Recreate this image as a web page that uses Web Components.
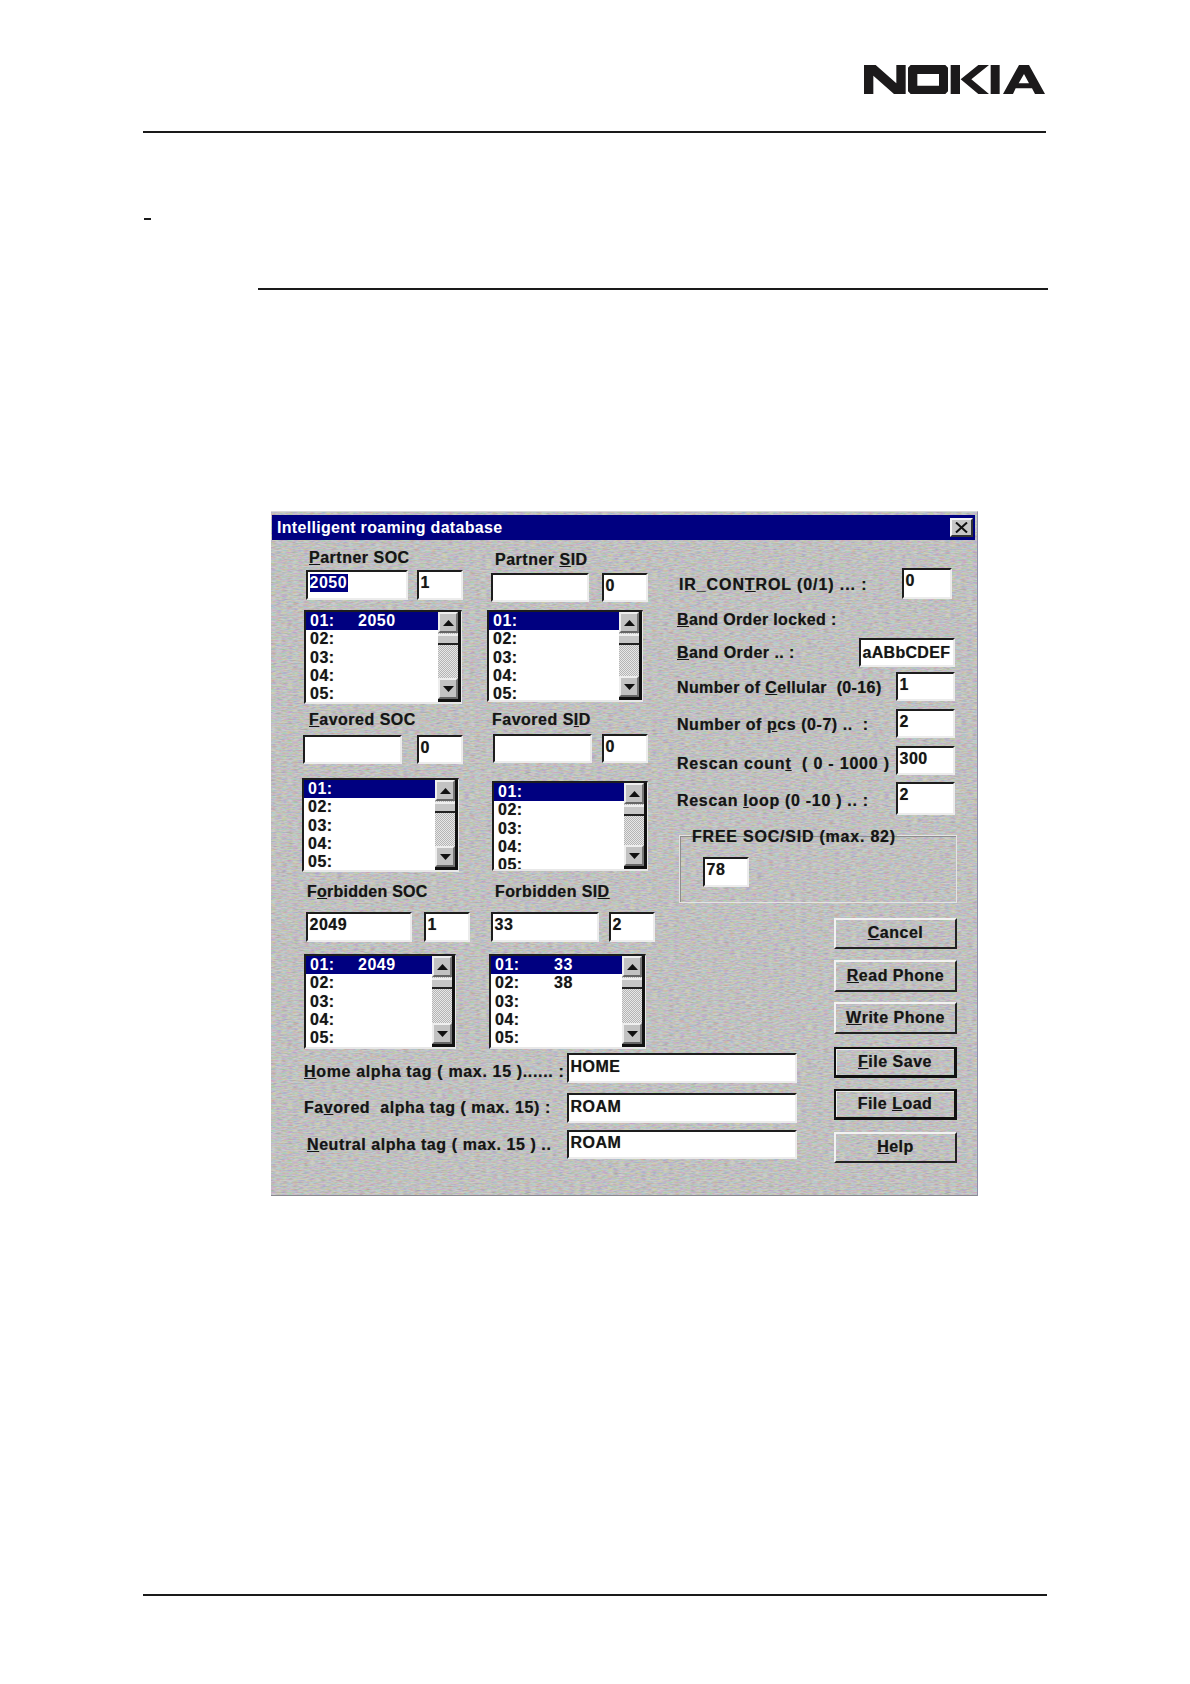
<!DOCTYPE html>
<html lang="en"><head><meta charset="utf-8"><title>Intelligent roaming database</title>
<style>
html,body{margin:0;padding:0;background:#fff}
body{font-family:"Liberation Sans",Arial,sans-serif}
</style></head>
<body>
<doc-page>
  <roam-dialog heading="Intelligent roaming database">
    <div slot="left" class="left-stack" style="display:flex;flex-direction:column">
      <div style="display:flex;align-items:flex-start;margin-left:2px">
        <soc-group style="width:183px;--lx:5px;--ix:2px;--w1:102px;--gap:9px;--ig:4px;--ih:30px;--lg:10px;--lw:158px;--lh:94px" v1="2050" v2="1" selected first="2050">
          <span slot="label"><u>P</u>artner SOC</span></soc-group>
        <soc-group noclip style="margin-top:2px;--lx:8px;--ix:4px;--w1:98px;--gap:13px;--ig:5px;--ih:29px;--lg:8px;--lw:156px;--lh:92px" v2="0">
          <span slot="label">Partner <u>S</u>ID</span></soc-group>
      </div>
      <div style="display:flex;align-items:flex-start;margin-top:6px">
        <soc-group style="width:190px;--lx:7px;--ix:1px;--w1:99px;--gap:15px;--ig:7px;--ih:29px;--lg:14px;--lw:157px;--lh:94px" v2="0">
          <span slot="label"><u>F</u>avored SOC</span></soc-group>
        <soc-group style="--lx:0px;--ix:1px;--w1:99px;--gap:10px;--ig:6px;--ih:29px;--lg:18px;--lw:156px;--lh:90px" v2="0">
          <span slot="label">Favored S<u>I</u>D</span></soc-group>
      </div>
      <div style="display:flex;align-items:flex-start;margin-top:10px;margin-left:2px">
        <soc-group style="width:185px;letter-spacing:.25px;--lx:3px;--ix:2px;--w1:106px;--gap:12px;--ig:12px;--ih:30px;--lg:12px;--lw:152px;--lh:95px" v1="2049" v2="1" first="2049">
          <span slot="label">F<u>o</u>rbidden SOC</span></soc-group>
        <soc-group style="letter-spacing:.4px;--lx:6px;--ix:2px;--w1:108px;--gap:10px;--ig:12px;--ih:30px;--lg:12px;--lw:157px;--lh:95px" v1="33" v2="2" first="33" second="38" col="59">
          <span slot="label">Forbidden SI<u>D</u></span></soc-group>
      </div>
      <div style="margin:4px 0 0 2px;display:flex;flex-direction:column">
        <tag-row style="--h:30px;--pt:10px;--ls:.65px"><span><u>H</u>ome alpha tag ( max. 15 )...... :</span><win-field slot="field" style="width:230px;height:30px;padding-top:3px">HOME</win-field></tag-row>
        <tag-row style="--h:30px;--pt:6px;--ls:.56px;margin-top:10px"><span>Fa<u>v</u>ored&nbsp; alpha tag ( max. 15) :</span><win-field slot="field" style="width:230px;height:30px;padding-top:3px">ROAM</win-field></tag-row>
        <tag-row style="--h:29px;--pt:6px;--pl:3px;--ls:.58px;margin-top:7px"><span><u>N</u>eutral alpha tag ( max. 15 ) ..</span><win-field slot="field" style="width:230px;height:29px">ROAM</win-field></tag-row>
      </div>
    </div>
    <div slot="right" style="display:flex;flex-direction:column">
      <set-row style="--pl:2px;--pr:3px;--pt:8px;--ls:.9px"><span>IR_CON<u>T</u>ROL (0/1) ... :</span><win-field slot="field" style="width:50px;height:31px">0</win-field></set-row>
      <set-row style="margin-top:11px;height:20px;--pt:1px;--ls:.35px"><span><u>B</u>and Order locked :</span></set-row>
      <set-row style="margin-top:8px;--pt:6px;--ls:.45px"><span><u>B</u>and Order .. :</span><win-field slot="field" style="width:96px;height:29px;padding-top:4px;letter-spacing:.3px">aABbCDEF</win-field></set-row>
      <set-row style="margin-top:5px;--pt:7px;--ls:.38px"><span>Number of <u>C</u>ellular&nbsp; (0-16)</span><win-field slot="field" style="width:59px;height:29px">1</win-field></set-row>
      <set-row style="margin-top:8px;--pt:7px;--ls:.55px"><span>Number of <u>p</u>cs (0-7) ..&nbsp; :</span><win-field slot="field" style="width:59px;height:29px">2</win-field></set-row>
      <set-row style="margin-top:8px;--pt:9px;--ls:.8px"><span>Rescan coun<u>t</u>&nbsp; ( 0 - 1000 )</span><win-field slot="field" style="width:59px;height:29px">300</win-field></set-row>
      <set-row style="margin-top:7px;--pt:10px;--ls:.7px"><span>Rescan <u>l</u>oop (0 -10 ) .. :</span><win-field slot="field" style="width:59px;height:33px">2</win-field></set-row>
      <free-box heading="FREE SOC/SID (max. 82)" style="margin:9px 0 0 2px"><win-field style="width:46px;height:30px">78</win-field></free-box>
      <div style="display:flex;flex-direction:column;align-self:flex-end;margin:15px 18px 0 0">
        <win-button><u>C</u>ancel</win-button>
        <win-button style="margin-top:11px;height:32px"><u>R</u>ead Phone</win-button>
        <win-button style="margin-top:10px;height:32px"><u>W</u>rite Phone</win-button>
        <win-button default style="margin-top:13px"><u>F</u>ile Save</win-button>
        <win-button default style="margin-top:11px"><span>File <u>L</u>oad</span></win-button>
        <win-button style="margin-top:12px"><u>H</u>elp</win-button>
      </div>
    </div>
  </roam-dialog>
</doc-page>

<script>
const el=(html)=>{const t=document.createElement('template');t.innerHTML=html;return t};
const FONT='font:bold 16px/18px "Liberation Sans",Arial,sans-serif;letter-spacing:.5px;color:#151515;text-shadow:0 0 .7px rgba(0,0,0,.45);';
const noise="url(\"data:image/svg+xml,%3Csvg xmlns='http://www.w3.org/2000/svg' width='420' height='420'%3E%3Cfilter id='n' x='0' y='0' width='100%25' height='100%25' color-interpolation-filters='sRGB'%3E%3CfeTurbulence type='fractalNoise' baseFrequency='.18 .7' numOctaves='2' seed='7' stitchTiles='stitch'/%3E%3CfeColorMatrix values='1.7 0 0 0 -.1 0 1.7 0 0 -.1 0 0 2.1 0 -.3 0 0 0 0 .2'/%3E%3C/filter%3E%3Crect width='420' height='420' filter='url(%23n)'/%3E%3C/svg%3E\")";

class Base extends HTMLElement{
  mount(t){const r=this.attachShadow({mode:'open'});r.appendChild(t.content.cloneNode(true));return r}
}

const pageT=el(`<style>
:host{display:block;width:1190px;height:1684px;overflow:hidden;background:#fff}
.logo{display:block;margin:65px 0 0 864px;width:181px;height:29px}
.rule{background:#1a1a1a;height:2px}
.r1{margin:37px 0 0 143px;width:903px}
.dash{margin:85px 0 0 144px;width:7px;height:2px;background:#1a1a1a}
.r2{margin:68px 0 0 258px;width:790px}
.dlg{margin:221px 0 0 271px;width:707px}
.r3{margin:398px 0 0 143px;width:904px}
</style>
<svg class="logo" viewBox="40 45 543 87" role="img" aria-label="Nokia logo" preserveAspectRatio="none">
<g fill="#1c1a1b">
<polygon points="40,45 75,45 137,100 137,45 165,45 165,132 130,132 68,77 68,132 40,132"/>
<path fill-rule="evenodd" d="M180 45H284L292 53V124L284 132H180L172 124V53ZM200 72V107H265V72Z"/>
<rect x="300" y="45" width="28" height="87"/>
<polygon points="330,88 383,45 415,45 362,88 415,132 383,132"/>
<rect x="420" y="45" width="27" height="87"/>
<path fill-rule="evenodd" d="M457 132L505 45H535L583 132H553L544 115H495L487 132ZM504 100H535L520 72Z"/>
</g></svg>
<div class="rule r1"></div><div class="dash"></div><div class="rule r2"></div>
<div class="dlg"><slot></slot></div>
<div class="rule r3"></div>`);
customElements.define('doc-page',class extends Base{constructor(){super();this.mount(pageT)}});

const dlgT=el(`<style>
:host{display:block;box-sizing:border-box;width:707px;height:685px;padding:3px 2px 0 1px;background:#c0c0c0 ${noise};
border-right:1px solid #8f8fa8;border-bottom:1px solid #8a8a90;border-top:1px solid #d8d8d8;${FONT}}
.title{height:25px;background:#000080;color:#fff;display:flex;align-items:center;justify-content:space-between;padding:0 2px 0 5px;letter-spacing:.3px;text-shadow:none}
.close{box-sizing:border-box;width:23px;height:19px;background:#c6c6c6;border:2px solid;border-color:#f4f4f4 #333 #333 #f4f4f4;display:flex;align-items:center;justify-content:center}
.body{display:flex;align-items:flex-start}
.l{width:375px;padding:8px 0 0 30px;flex:none;box-sizing:content-box}
.r{width:298px;padding-top:28px;margin-left:0;flex:none}
</style>
<div class="title"><span id="h"></span><span class="close"><svg width="13" height="11" viewBox="0 0 13 11"><path d="M1 0.5L12 10.5M12 0.5L1 10.5" stroke="#111" stroke-width="2"/></svg></span></div>
<div class="body"><div class="l"><slot name="left"></slot></div><div class="r"><slot name="right"></slot></div></div>`);
customElements.define('roam-dialog',class extends Base{constructor(){super();const r=this.mount(dlgT);r.getElementById('h').textContent=this.getAttribute('heading')}});

const fieldT=el(`<style>
:host{display:block;box-sizing:border-box;background:#fff;border:2px solid;border-color:#1d1d1d #ececec #ececec #1d1d1d;padding:2px 0 0 1.5px;${FONT}white-space:nowrap;overflow:hidden;flex:none}
:host([selected]) .t{background:#000080;color:#fff;text-shadow:none}
.t{display:inline-block;padding-right:.5px}
</style><span class="t"><slot></slot></span>`);
customElements.define('win-field',class extends Base{constructor(){super();this.mount(fieldT)}});

const listT=el(`<style>
:host{display:flex;box-sizing:border-box;background:#fff;border:2px solid;border-right-width:1px;border-color:#1d1d1d #e8e8e8 #e8e8e8 #1d1d1d;${FONT}overflow:hidden}
:host([noclip]){overflow:visible}
:host([noclip]) .rows{overflow:visible}
.rows{flex:1;min-width:0;overflow:hidden}
.row{height:18.33px;padding-left:4px;white-space:nowrap;display:flex;line-height:18.33px}
.row.sel{background:#000080;color:#fff;text-shadow:none}
.n{flex:none}
.bar{flex:none;width:20px;display:flex;flex-direction:column;border-right:3px solid #111;border-bottom:3px solid #111;box-sizing:content-box;background:repeating-conic-gradient(#b4b4b4 0 25%,#e8e8e8 0 50%) 0 0/2px 2px;height:calc(100% - 3px)}
.btn{box-sizing:border-box;height:21px;background:#c2c2c2;border:2px solid;border-color:#eee #777 #666 #eee;display:flex;align-items:center;justify-content:center;flex:none}
.thumb{box-sizing:border-box;height:11px;background:#c6c6c6;border-top:2px solid #eee;border-bottom:2px solid #222;flex:none;margin-top:1px}
.sp{flex:1}
</style><div class="rows" id="rows"></div>
<div class="bar"><div class="btn"><svg width="11" height="6" viewBox="0 0 11 6"><path d="M5.5 0L11 6H0Z" fill="#111"/></svg></div><div class="thumb"></div><div class="sp"></div><div class="btn"><svg width="11" height="6" viewBox="0 0 11 6"><path d="M0 0H11L5.5 6Z" fill="#111"/></svg></div></div>`);
customElements.define('win-list',class extends Base{
  constructor(){super();this.mount(listT)}
  connectedCallback(){
    const rows=this.shadowRoot.getElementById('rows');if(rows.firstChild)return;
    const col=+(this.getAttribute('col')||48);const vals=[this.getAttribute('first'),this.getAttribute('second')];
    for(let i=0;i<5;i++){const d=document.createElement('div');d.className='row'+(i==0?' sel':'');
      const n=document.createElement('span');n.className='n';n.style.width=col+'px';n.textContent='0'+(i+1)+':';d.appendChild(n);
      if(vals[i]){const v=document.createElement('span');v.textContent=vals[i];d.appendChild(v)}
      rows.appendChild(d)}
  }
});

const groupT=el(`<style>
:host{display:flex;flex-direction:column;flex:none;${FONT}}
.lab{margin-left:var(--lx);height:17px;padding-top:1px;white-space:nowrap}
.inp{display:flex;margin:var(--ig) 0 0 var(--ix);letter-spacing:.5px}
.a{width:var(--w1);height:var(--ih)}
.b{width:46px;height:var(--ih);margin-left:var(--gap)}
win-list{width:var(--lw);height:var(--lh);margin-top:var(--lg);letter-spacing:.5px}
</style><div class="lab"><slot name="label"></slot></div>
<div class="inp"><win-field class="a" id="a"></win-field><win-field class="b" id="b"></win-field></div>
<div id="lw"></div>`);
customElements.define('soc-group',class extends Base{constructor(){super();const r=this.mount(groupT);
  const a=r.getElementById('a');a.textContent=this.getAttribute('v1')||'';
  if(this.hasAttribute('selected'))a.setAttribute('selected','');
  r.getElementById('b').textContent=this.getAttribute('v2')||'';
  const l=document.createElement('win-list');
  for(const k of ['first','second','col','noclip'])if(this.hasAttribute(k))l.setAttribute(k,this.getAttribute(k));
  r.getElementById('lw').replaceWith(l);
}
connectedCallback(){const s=this.style.letterSpacing;if(s){this.shadowRoot.querySelector('.lab').style.letterSpacing=s}}
});

const tagT=el(`<style>
:host{display:flex;height:var(--h);${FONT}}
.t{width:263px;flex:none;box-sizing:border-box;padding:var(--pt) 0 0 var(--pl,0);white-space:nowrap;letter-spacing:var(--ls,.5px)}
</style><div class="t"><slot></slot></div><slot name="field"></slot>`);
customElements.define('tag-row',class extends Base{constructor(){super();this.mount(tagT)}});

const setT=el(`<style>
:host{display:flex;justify-content:space-between;${FONT}width:278px}
.t{padding:var(--pt,0) 0 0 var(--pl,0);white-space:nowrap;letter-spacing:var(--ls,.5px)}
.f{padding-right:var(--pr,0)}
</style><div class="t"><slot></slot></div><div class="f"><slot name="field"></slot></div>`);
customElements.define('set-row',class extends Base{constructor(){super();this.mount(setT)}});

const freeT=el(`<style>
:host{display:block;${FONT}width:278px}
fieldset{box-sizing:border-box;margin:0;height:79px;padding:0;border:1px solid #e4e4e4;box-shadow:inset 1px 1px 0 #8d8d8d;min-width:0}
legend{padding:4px 1px 0;margin-left:11px;line-height:18px;letter-spacing:.78px}
.c{margin:11px 0 0 23px}
</style><fieldset><legend id="h"></legend><div class="c"><slot></slot></div></fieldset>`);
customElements.define('free-box',class extends Base{constructor(){super();const r=this.mount(freeT);r.getElementById('h').textContent=this.getAttribute('heading')}});

const btnT=el(`<style>
:host{display:flex;box-sizing:border-box;width:123px;height:31px;align-items:center;justify-content:center;border:2px solid;border-color:#f2f2f2 #222 #222 #f2f2f2;${FONT}white-space:nowrap;padding-bottom:1px}
:host([default]){border:3px solid #111;border-top-width:2px;border-left-width:2px;box-shadow:inset 1px 1px 0 #eee}
</style><slot></slot>`);
customElements.define('win-button',class extends Base{constructor(){super();this.mount(btnT)}});
</script>
</body></html>
